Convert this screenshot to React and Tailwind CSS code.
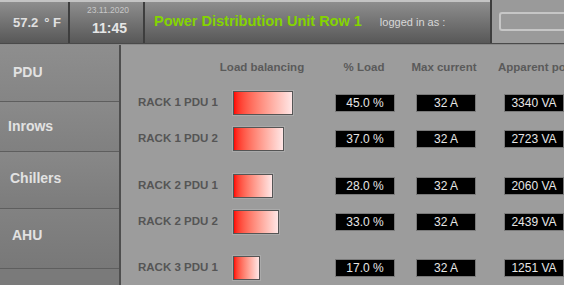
import React from "react";

const rows = [
  { label: "RACK 1 PDU 1", w: 60, pct: "45.0 %", cur: "32 A", va: "3340 VA", mt: 0 },
  { label: "RACK 1 PDU 2", w: 51, pct: "37.0 %", cur: "32 A", va: "2723 VA", mt: 0 },
  { label: "RACK 2 PDU 1", w: 40, pct: "28.0 %", cur: "32 A", va: "2060 VA", mt: 11 },
  { label: "RACK 2 PDU 2", w: 46, pct: "33.0 %", cur: "32 A", va: "2439 VA", mt: 0 },
  { label: "RACK 3 PDU 1", w: 27, pct: "17.0 %", cur: "32 A", va: "1251 VA", mt: 10 },
];

function Box({ children }) {
  return (
    <div className="w-[60px] h-[18px] shrink-0 bg-black border border-[#7a7a7a] flex items-center justify-center text-[12px] text-[#e6e6e6] leading-none">
      {children}
    </div>
  );
}

export default function App() {
  return (
    <div
      className="w-[564px] h-[285px] overflow-hidden bg-[#9c9c9c] flex flex-col"
      style={{ fontFamily: '"Liberation Sans", Arial, sans-serif' }}
    >
      {/* header */}
      <div className="h-[44px] flex shrink-0 border-t-2 border-[#c4c4c4] bg-gradient-to-b from-[#8e8e8e] to-[#585858] border-b border-b-[#4a4a4a]">
        <div className="w-[70px] flex items-center justify-end pr-[7px] border-r-2 border-[#3e3e3e] text-[13px] font-bold text-[#e0e0e0]">
          57.2<span className="ml-[6px]">° F</span>
        </div>
        <div className="w-[75px] flex flex-col items-center justify-center border-r-2 border-[#3e3e3e] pl-[6px]">
          <div className="text-[8.5px] text-[#c8c8c8] leading-none mt-[-4px] -ml-[3px]">23.11.2020</div>
          <div className="text-[14px] font-bold text-[#e6e6e6] leading-none mt-[6px]">11:45</div>
        </div>
        <div className="flex-1 flex items-center pl-[9px] pb-[1px]">
          <span className="text-[14.5px] font-bold text-[#84d400]">Power Distribution Unit Row 1</span>
          <span className="ml-[18px] text-[11px] text-[#d8d8d8]">logged in as :</span>
        </div>
        <div className="w-[74px] bg-[#9a9a9a] border-l-2 border-[#3e3e3e] -mt-[2px] pt-[12px] pl-[7px]">
          <div className="h-[19px] w-full border-2 border-r-0 border-[#c6c6c6] rounded-l-[3px] bg-[#9a9a9a]" />
        </div>
      </div>
      <div className="h-[1px] bg-[#8a8a8a] shrink-0" />
      <div className="flex flex-1">
        {/* sidebar */}
        <div className="w-[121px] shrink-0 bg-[#858585] border-r-2 border-[#4e4e4e] flex flex-col text-[14px] font-bold text-[#e2e2e2]">
          <div className="h-[57px] flex items-center pl-[13px] pb-[1px] border-b border-[#5e5e5e] bg-gradient-to-b from-[#8e8e8e] to-[#858585]">PDU</div>
          <div className="h-[50px] flex items-center pl-[8px] border-b border-[#5e5e5e] bg-gradient-to-b from-[#8a8a8a] to-[#808080]">Inrows</div>
          <div className="h-[57px] flex items-center pl-[10px] pb-[3px] border-b border-[#5e5e5e] bg-gradient-to-b from-[#888888] to-[#7c7c7c]">Chillers</div>
          <div className="h-[60px] flex items-center pl-[12px] pb-[7px] border-b border-[#5e5e5e] bg-gradient-to-b from-[#828282] to-[#787878]">AHU</div>
          <div className="flex-1 bg-[#7a7a7a]" />
        </div>
        {/* content */}
        <div className="flex-1 flex flex-col overflow-hidden">
          <div className="h-[40px] flex items-center pt-[6px] text-[11.5px] font-bold text-[#5a5a5a] whitespace-nowrap">
            <div className="w-[98px] shrink-0" />
            <div className="w-[86px] shrink-0 text-center">Load balancing</div>
            <div className="w-[29px] shrink-0" />
            <div className="w-[60px] shrink-0 text-center">% Load</div>
            <div className="w-[16px] shrink-0" />
            <div className="w-[68px] shrink-0 text-center">Max current</div>
            <div className="w-[20px] shrink-0" />
            <div className="shrink-0">Apparent power</div>
          </div>
          {rows.map((r, i) => (
            <div key={i} className="h-[36px] flex items-center shrink-0" style={{ marginTop: r.mt }}>
              <div className="w-[17px] shrink-0" />
              <div className="w-[95px] shrink-0 text-[11.5px] font-bold text-[#555555] whitespace-nowrap">{r.label}</div>
              <div className="w-[102px] shrink-0 flex items-center">
                <div
                  className="h-[24px] border border-[#555555] bg-gradient-to-r from-[#ff0000] to-[#ffe6e6] shadow-[0_0_0_1px_rgba(255,255,255,0.15)]"
                  style={{ width: r.w }}
                />
              </div>
              <Box>{r.pct}</Box>
              <div className="w-[21px] shrink-0" />
              <Box>{r.cur}</Box>
              <div className="w-[28px] shrink-0" />
              <Box>{r.va}</Box>
            </div>
          ))}
        </div>
      </div>
    </div>
  );
}
